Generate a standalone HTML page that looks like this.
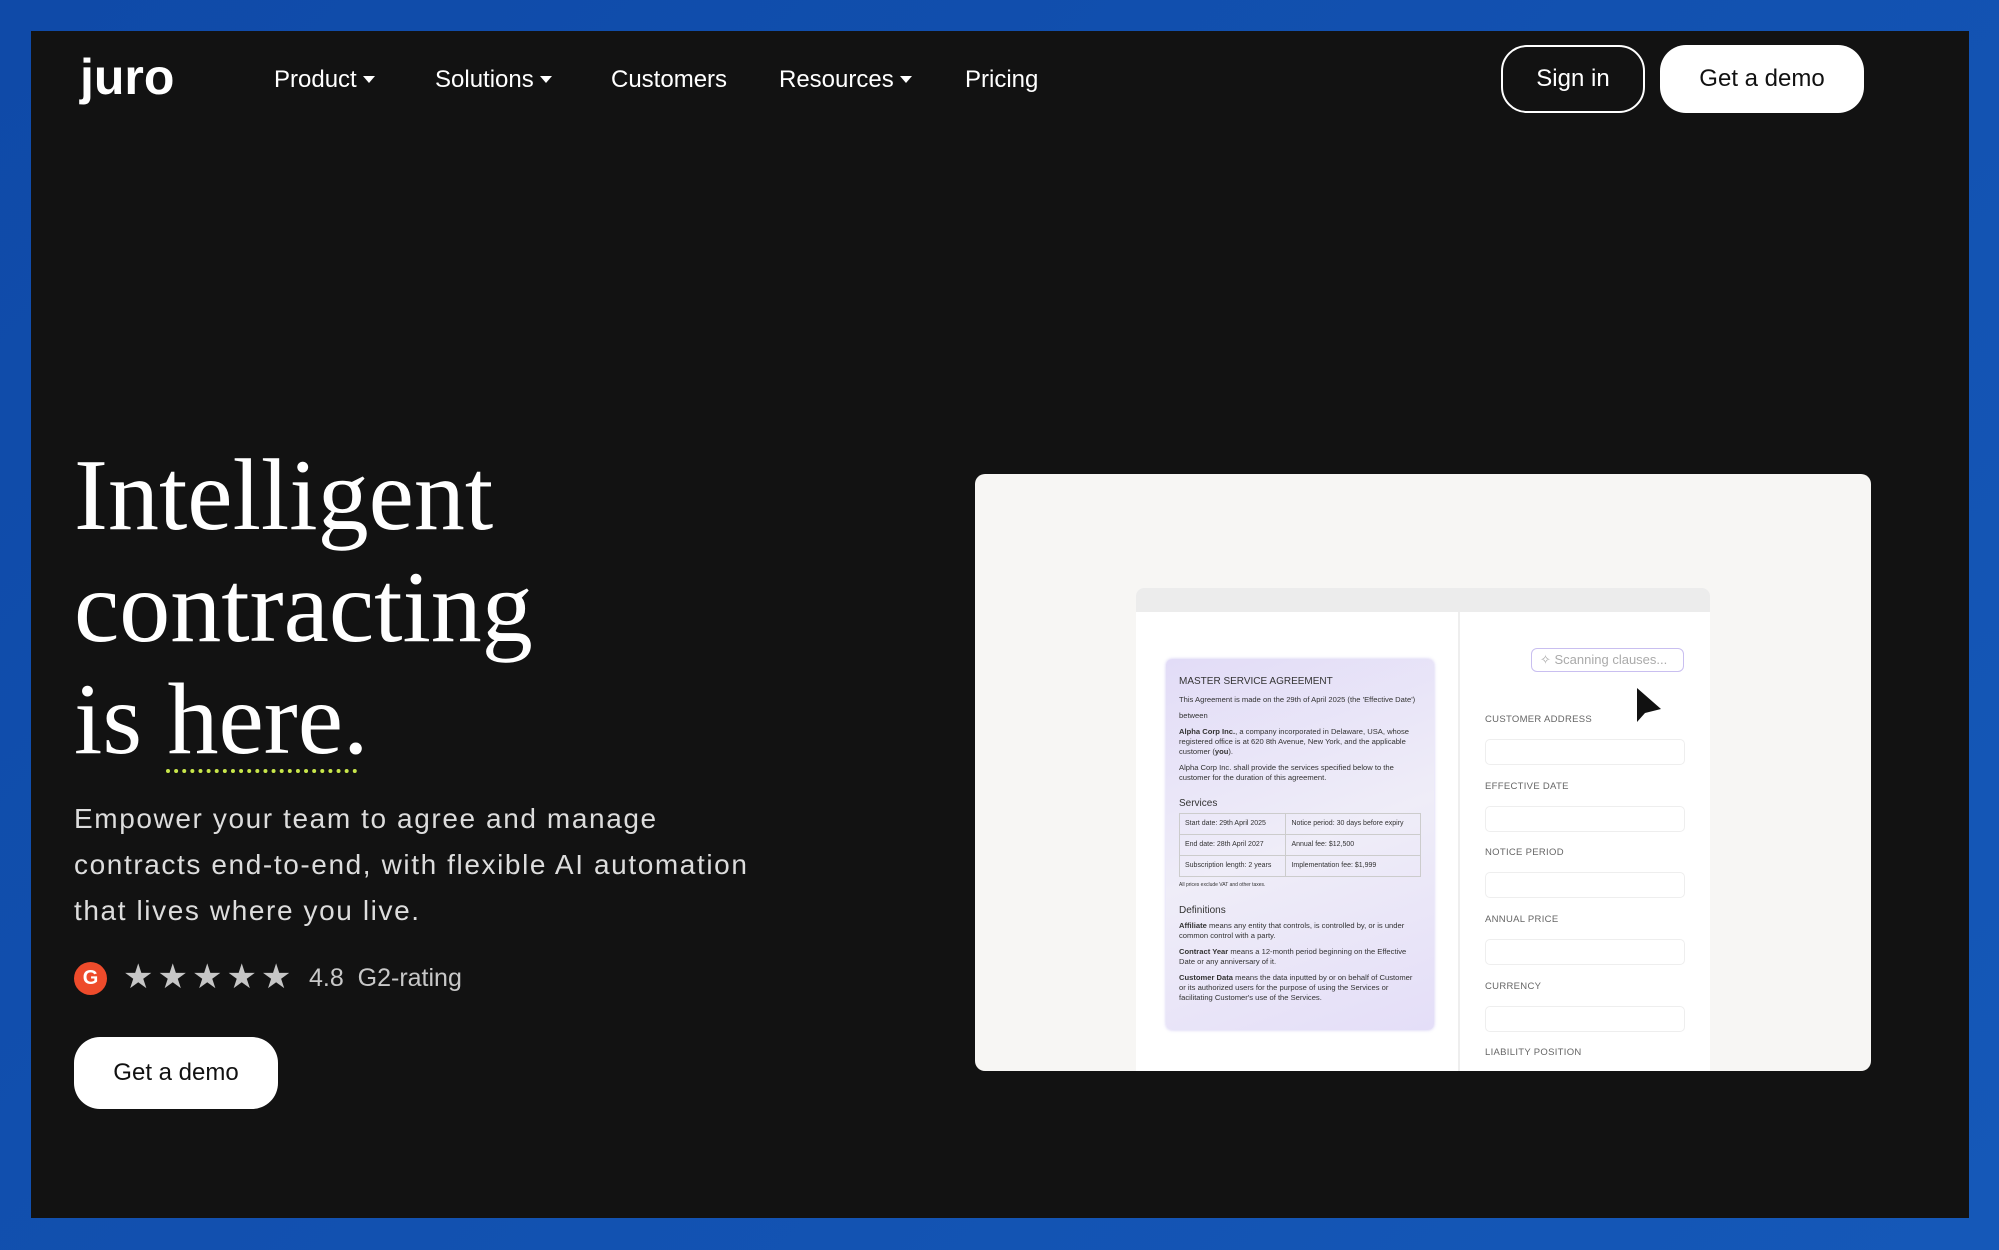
<!DOCTYPE html>
<html><head><meta charset="utf-8"><style>
*{margin:0;padding:0;box-sizing:border-box}
html,body{width:1999px;height:1250px;overflow:hidden}
body{background:linear-gradient(135deg,#0f4aa8,#1558b8);font-family:"Liberation Sans",sans-serif;position:relative}
#p{position:absolute;left:31px;top:31px;width:1938px;height:1187px;background:#121212}
.a{position:absolute}
.nav{color:#fff;font-size:24px;top:66px}
.tri{display:inline-block;width:0;height:0;border-left:6px solid transparent;border-right:6px solid transparent;border-top:7px solid #fff;margin-left:6px;vertical-align:4px}
.btn{position:absolute;border-radius:26px;font-size:24px;display:flex;align-items:center;justify-content:center}
h1{position:absolute;left:74px;top:440px;font-family:"Liberation Serif",serif;font-weight:normal;color:#fff;font-size:102px;line-height:112px;letter-spacing:0}
.para{left:74px;top:796px;color:#ddd;font-size:28px;letter-spacing:1.6px;line-height:46px;width:900px}
.lbl{position:absolute;left:1485px;font-size:9.5px;color:#666;letter-spacing:.3px}
.inp{position:absolute;left:1485px;width:200px;height:26px;border:1px solid #eee;border-radius:5px;background:#fff}
.doc{position:absolute;left:1166px;top:659px;width:268px;height:371px;border-radius:6px;background:linear-gradient(160deg,#e2dcf7,#efedf8 50%,#e4def8);box-shadow:0 0 3px rgba(120,100,220,.35);padding:18px 13px;font-size:7.6px;color:#333;line-height:10px}
.doc p{margin-bottom:6px}
table{border-collapse:collapse;width:100%;margin-top:4px;font-size:7px}
td{border:1px solid #ccc;padding:5px 5px}
</style></head><body>
<div id="p"></div>
<div class="a" style="left:80px;top:48px;color:#fff;font-size:50px;font-weight:bold;letter-spacing:0;font-family:'Liberation Sans',sans-serif">juro</div>
<div class="a nav" style="left:274px">Product<span class="tri"></span></div>
<div class="a nav" style="left:435px">Solutions<span class="tri"></span></div>
<div class="a nav" style="left:611px">Customers</div>
<div class="a nav" style="left:779px">Resources<span class="tri"></span></div>
<div class="a nav" style="left:965px">Pricing</div>
<div class="btn" style="left:1501px;top:45px;width:144px;height:68px;border:2px solid #fff;color:#fff">Sign in</div>
<div class="btn" style="left:1660px;top:45px;width:204px;height:68px;background:#fff;color:#111">Get a demo</div>
<h1>Intelligent<br>contracting<br>is here.</h1>
<div class="a" style="left:166px;top:769px;width:191px;border-top:4px dotted #c8e64a"></div>
<div class="a para">Empower your team to agree and manage<br>contracts end-to-end, with flexible AI automation<br>that lives where you live.</div>
<div class="a" style="left:74px;top:962px;width:33px;height:33px;border-radius:50%;background:#ee4b2b;color:#fff;font-weight:bold;font-size:20px;text-align:center;line-height:33px">G</div>
<div class="a" style="left:123px;top:957px;color:#c6c6c6;font-size:34px;letter-spacing:4px">★★★★★</div>
<div class="a" style="left:309px;top:964px;color:#c8c8c8;font-size:25px">4.8&nbsp; G2-rating</div>
<div class="btn" style="left:74px;top:1037px;width:204px;height:72px;background:#fff;color:#111">Get a demo</div>
<div class="a" style="left:975px;top:474px;width:896px;height:597px;background:#f7f6f4;border-radius:10px;overflow:hidden"></div>
<div class="a" style="left:1136px;top:588px;width:574px;height:483px;background:#fff;border-radius:8px 8px 0 0;overflow:hidden">
<div style="height:24px;background:#ececec"></div>
<div class="a" style="left:322px;top:24px;width:2px;height:460px;background:#eee"></div>
</div>
<div class="doc">
<div style="font-size:10px;margin-bottom:8px">MASTER SERVICE AGREEMENT</div>
<p>This Agreement is made on the 29th of April 2025 (the 'Effective Date')</p>
<p>between</p>
<p><b>Alpha Corp Inc.</b>, a company incorporated in Delaware, USA, whose registered office is at 620 8th Avenue, New York, and the applicable customer (<b>you</b>).</p>
<p>Alpha Corp Inc. shall provide the services specified below to the customer for the duration of this agreement.</p>
<div style="font-size:10px;margin-top:16px">Services</div>
<table><tr><td>Start date: 29th April 2025</td><td>Notice period: 30 days before expiry</td></tr><tr><td>End date: 28th April 2027</td><td>Annual fee: $12,500</td></tr><tr><td>Subscription length: 2 years</td><td>Implementation fee: $1,999</td></tr></table>
<div style="font-size:5px;margin-top:3px">All prices exclude VAT and other taxes.</div>
<div style="font-size:10px;margin-top:16px;margin-bottom:5px">Definitions</div>
<p><b>Affiliate</b> means any entity that controls, is controlled by, or is under common control with a party.</p>
<p><b>Contract Year</b> means a 12-month period beginning on the Effective Date or any anniversary of it.</p>
<p><b>Customer Data</b> means the data inputted by or on behalf of Customer or its authorized users for the purpose of using the Services or facilitating Customer's use of the Services.</p>
</div>
<div class="a" style="left:1531px;top:648px;width:153px;height:24px;border:1.5px solid #c9bff0;border-radius:6px;color:#aaa;font-size:13px;line-height:21px;padding-left:8px">✧ Scanning clauses...</div>
<svg class="a" style="left:1634px;top:686px" width="32" height="40" viewBox="0 0 32 40"><path d="M3 2 L3 36 L11 27 L27 23 Z" fill="#111"/></svg>
<div class="lbl" style="top:714px">CUSTOMER ADDRESS</div><div class="inp" style="top:739px"></div>
<div class="lbl" style="top:781px">EFFECTIVE DATE</div><div class="inp" style="top:806px"></div>
<div class="lbl" style="top:847px">NOTICE PERIOD</div><div class="inp" style="top:872px"></div>
<div class="lbl" style="top:914px">ANNUAL PRICE</div><div class="inp" style="top:939px"></div>
<div class="lbl" style="top:981px">CURRENCY</div><div class="inp" style="top:1006px"></div>
<div class="lbl" style="top:1047px">LIABILITY POSITION</div>
</body></html>
